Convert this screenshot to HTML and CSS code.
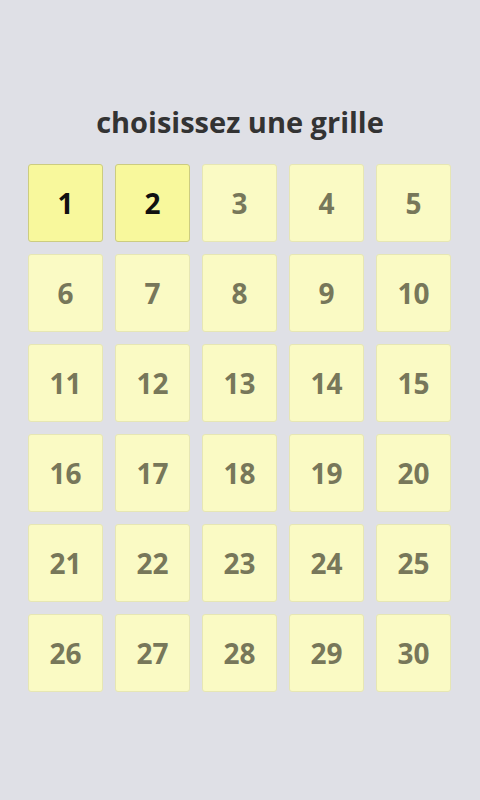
FILE: index.html
```html
<!DOCTYPE html>
<html lang="fr">
<head>
    <meta charset="UTF-8">
    <meta name="viewport" content="width=device-width, initial-scale=1">
    <title>choisissez une grille</title>
    <link rel="stylesheet" href="styles.css">
</head>
<body>
    <h1>choisissez une grille</h1>

    <div id="grids" class="grid-list">
        <button class="grid-btn unlocked">1</button>
        <button class="grid-btn unlocked">2</button>
        <button class="grid-btn">3</button>
        <button class="grid-btn">4</button>
        <button class="grid-btn">5</button>
        <button class="grid-btn">6</button>
        <button class="grid-btn">7</button>
        <button class="grid-btn">8</button>
        <button class="grid-btn">9</button>
        <button class="grid-btn">10</button>
        <button class="grid-btn">11</button>
        <button class="grid-btn">12</button>
        <button class="grid-btn">13</button>
        <button class="grid-btn">14</button>
        <button class="grid-btn">15</button>
        <button class="grid-btn">16</button>
        <button class="grid-btn">17</button>
        <button class="grid-btn">18</button>
        <button class="grid-btn">19</button>
        <button class="grid-btn">20</button>
        <button class="grid-btn">21</button>
        <button class="grid-btn">22</button>
        <button class="grid-btn">23</button>
        <button class="grid-btn">24</button>
        <button class="grid-btn">25</button>
        <button class="grid-btn">26</button>
        <button class="grid-btn">27</button>
        <button class="grid-btn">28</button>
        <button class="grid-btn">29</button>
        <button class="grid-btn">30</button>
    </div>
</body>
</html>
```

FILE: styles.css
```css
body {
    font-family: "Open Sans", "DejaVu Sans", sans-serif;
    margin: 0;
    padding: 103px 0 0 28px;
    background-color: #dfe0e6;
    box-sizing: border-box;
    height: 800px;
}
h1 {
    margin: 0 28px 18px 0;
    height: 43px;
    line-height: 38px;
    font-size: 29px;
    font-weight: bold;
    color: #333333;
    text-align: center;
}
.grid-list {
    display: grid;
    grid-template-columns: repeat(5, 75px);
    grid-auto-rows: 78px;
    column-gap: 12px;
    row-gap: 12px;
}
.grid-btn {
    margin: 0;
    padding: 0;
    font-family: inherit;
    font-size: 28px;
    font-weight: bold;
    color: #77775a;
    background-color: #fafac4;
    border: 1px solid #e6e6b4;
    border-radius: 3px;
    cursor: pointer;
}
.grid-btn.unlocked {
    color: #111111;
    background-color: #f8f89c;
    border-color: #cccc80;
}
```
